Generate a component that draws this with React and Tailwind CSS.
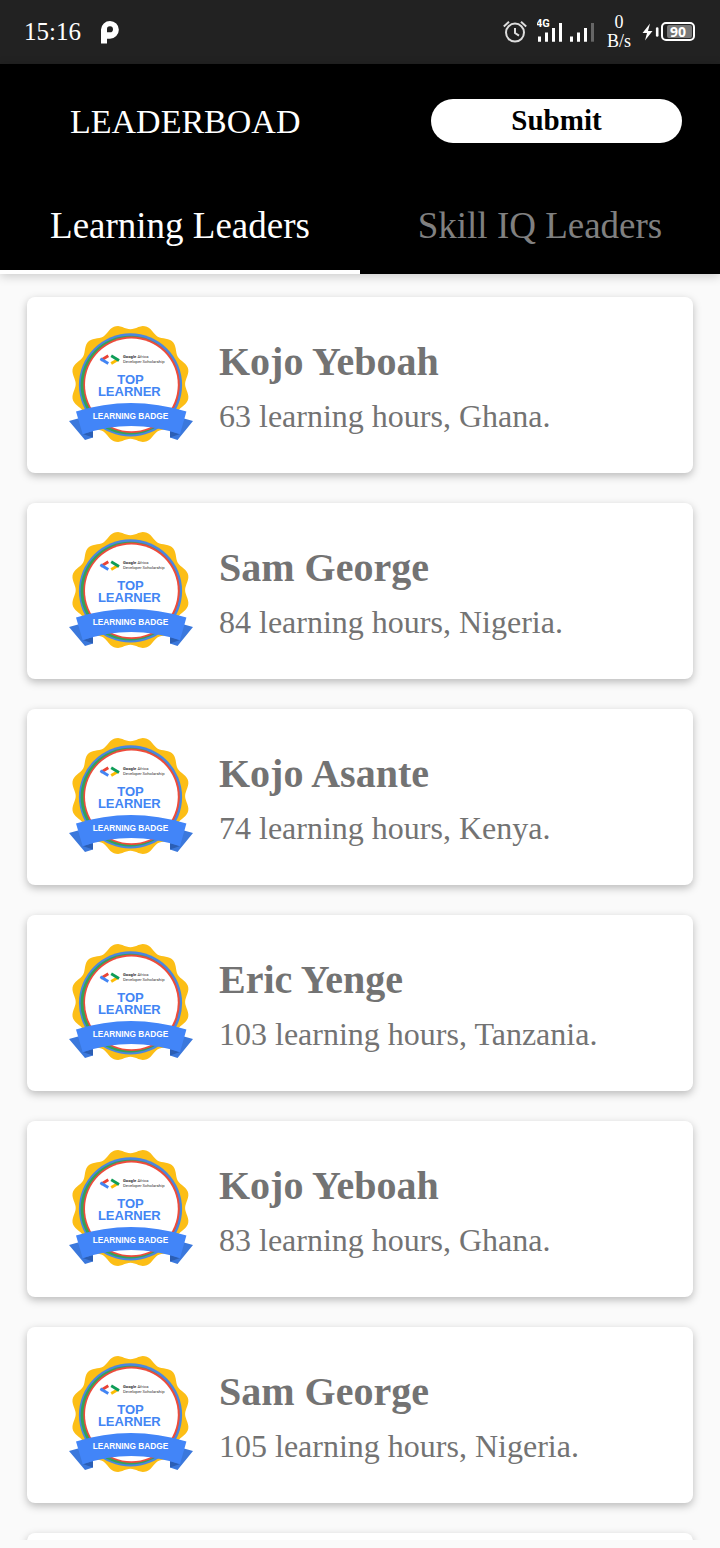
import React, { useState } from "react";

const leaders = [
  { name: "Kojo Yeboah", hours: 63, country: "Ghana" },
  { name: "Sam George", hours: 84, country: "Nigeria" },
  { name: "Kojo Asante", hours: 74, country: "Kenya" },
  { name: "Eric Yenge", hours: 103, country: "Tanzania" },
  { name: "Kojo Yeboah", hours: 83, country: "Ghana" },
  { name: "Sam George", hours: 105, country: "Nigeria" },
];

// Outline of the badge: twelve soft lobes around the centre.
const scallop =
  Array.from({ length: 180 }, (_, i) => {
    const a = (i / 180) * Math.PI * 2;
    const r = 57.2 - 2.5 * Math.cos(12 * a);
    const x = 62.4 + r * Math.sin(a);
    const y = 60 - r * Math.cos(a);
    return `${i ? "L" : "M"}${x.toFixed(2)} ${y.toFixed(2)}`;
  }).join("") + "Z";

function Badge() {
  return (
    <svg viewBox="0 1 126 120" className="h-[120px] w-[126px] shrink-0" role="img" aria-label="Top learner learning badge">
      <path d={scallop} fill="#fcbe16" />
      <circle cx="62.5" cy="60.9" r="51.6" fill="#4a86e0" />
      <circle cx="62" cy="61.2" r="49.4" fill="#34a25a" />
      <circle cx="63.6" cy="60.8" r="48.2" fill="#ee4b3b" />
      <circle cx="63.4" cy="60.8" r="46.4" fill="#fff" />
      <g fill="none" strokeWidth="2.9">
        <path d="M40.3 31.8L33 36.2" stroke="#ea4335" />
        <path d="M32.4 34.8L40.3 39.4" stroke="#4285f4" />
        <path d="M43.2 39.4L50.4 35.2" stroke="#fbbc04" />
        <path d="M43.2 31.8L51 36.4" stroke="#0f9d58" />
      </g>
      <g fontFamily="Roboto, sans-serif" fontSize="4.2" fill="#333">
        <text x="55" y="34.4"><tspan fontWeight="700">Google</tspan> Africa</text>
        <text x="55" y="39.4">Developer Scholarship</text>
      </g>
      <g fontFamily="Liberation Sans, sans-serif" fontWeight="700" textAnchor="middle">
        <text x="62.5" y="60" fontSize="13" fill="#4285f4">TOP</text>
        <text x="61.3" y="72" fontSize="13" fill="#4285f4">LEARNER</text>
      </g>
      <path d="M1 97L10 94.5L25 108V113.6L17 116Z M125 97L116 94.5L102 108V113.6L109.5 116Z" fill="#3b78dc" />
      <path d="M14.7 110L25 107V113.6Z M112 110L102 107V113.6Z" fill="#2b5eb4" />
      <path d="M8 87.6Q62.7 70.4 118.4 87.6L112 110.2Q63 93.6 14.7 110.2Z" fill="#4285f8" />
      <text x="62.5" y="94.6" fontFamily="Liberation Sans, sans-serif" fontWeight="700" fontSize="8.3" fill="#fff" textAnchor="middle">
        LEARNING BADGE
      </text>
    </svg>
  );
}

function StatusBar() {
  return (
    <div className="flex h-16 shrink-0 items-center justify-between bg-[#222] pl-6 pr-[25px] text-white">
      <div className="flex items-center gap-5">
        <span className="text-[25px]">15:16</span>
        <svg viewBox="0 0 20 24" className="h-6 w-5" aria-hidden="true">
          <path fillRule="evenodd" fill="#fff" d="M0 9.5A9 9 0 0 1 9 1A8.8 8.8 0 0 1 9 18.7H6V23.6H0ZM6 12.2H9A3 3 0 1 0 6 9.4Z" />
        </svg>
      </div>
      <div className="flex items-center gap-1.5">
        <svg viewBox="0 0 24 24" className="mr-1 h-6 w-6" fill="none" stroke="#ddd" strokeWidth="2" aria-hidden="true">
          <circle cx="12" cy="12.6" r="9" />
          <path d="M12 8V13L16 15.6M0.8 6.4L6 1.8M23.2 6.4L18 1.8" />
        </svg>
        <svg viewBox="0 0 60 30" className="h-[30px] w-[60px]" aria-hidden="true">
          <text x="-1" y="10" fontFamily="Roboto, sans-serif" fontWeight="700" fontSize="11" fill="#fff">4G</text>
          <path d="M2.5 19.5V24.7M9.5 15.5V24.7M16.5 11V24.7M23.5 6V24.7M34.5 19.5V24.7M41.5 15.5V24.7M48.5 11V24.7" stroke="#fff" strokeWidth="3" />
          <path d="M55.5 6V24.7" stroke="#666" strokeWidth="3" />
        </svg>
        <div className="flex w-8 flex-col items-center text-[18px] leading-[19px]">
          <span>0</span>
          <span>B/s</span>
        </div>
        <svg viewBox="0 0 54 24" className="h-6 w-[54px]" aria-label="Battery 90" role="img">
          <path d="M9 3.5L1.5 13H6L4 20.5L11.5 11H7Z" fill="#fff" />
          <path d="M16.2 8.5V15.5" stroke="#fff" strokeWidth="2.6" strokeLinecap="round" />
          <rect x="21" y="3" width="32" height="17" rx="4" fill="none" stroke="#fff" strokeWidth="2" />
          <rect x="26" y="5" width="25" height="13" rx="2" fill="#777" />
          <text x="37" y="16.6" textAnchor="middle" fontFamily="Open Sans, sans-serif" fontWeight="700" fontSize="14" fill="#fff">90</text>
        </svg>
      </div>
    </div>
  );
}

function Tab({ active, onClick, children }) {
  return (
    <button
      type="button"
      role="tab"
      aria-selected={active}
      onClick={onClick}
      className={`flex-1 border-b-4 pt-1 text-[37px] ${active ? "border-white text-white" : "border-black text-[#808080]"}`}
    >
      {children}
    </button>
  );
}

export default function App() {
  const [tab, setTab] = useState(0);
  return (
    <div className="flex h-screen flex-col bg-[#fafafa] pb-2 font-['Liberation_Serif',serif]">
      <StatusBar />
      <header className="relative shrink-0 bg-black shadow-[0_2px_10px_rgba(0,0,0,0.2)]">
        <div className="flex h-[114px] items-center justify-between pl-[70px] pr-[38px]">
          <h1 className="text-[34px] text-white">LEADERBOAD</h1>
          <button type="button" className="flex h-11 w-[251px] items-center justify-center rounded-full bg-white text-[29px] font-bold text-black">
            Submit
          </button>
        </div>
        <div role="tablist" className="flex h-24">
          <Tab active={tab === 0} onClick={() => setTab(0)}>Learning Leaders</Tab>
          <Tab active={tab === 1} onClick={() => setTab(1)}>Skill IQ Leaders</Tab>
        </div>
      </header>
      <main className="min-h-0 flex-1 overflow-hidden">
        <ul className="flex flex-col gap-[30px] px-[27px] pt-[23px]">
          {leaders.map((l, i) => (
            <li key={i} className="flex h-44 items-center gap-[25px] rounded-lg bg-white pl-[41px] shadow-[0_3px_8px_rgba(0,0,0,0.26)]">
              <Badge />
              <div className="flex flex-col gap-3 pt-1 text-[#737373]">
                <h2 className="text-[40px] font-bold leading-[46px]">{l.name}</h2>
                <p className="text-[32px] leading-[38px]">{`${l.hours} learning hours, ${l.country}.`}</p>
              </div>
            </li>
          ))}
          <li aria-hidden="true" className="h-44 rounded-lg bg-white shadow-[0_3px_8px_rgba(0,0,0,0.26)]" />
        </ul>
      </main>
    </div>
  );
}
